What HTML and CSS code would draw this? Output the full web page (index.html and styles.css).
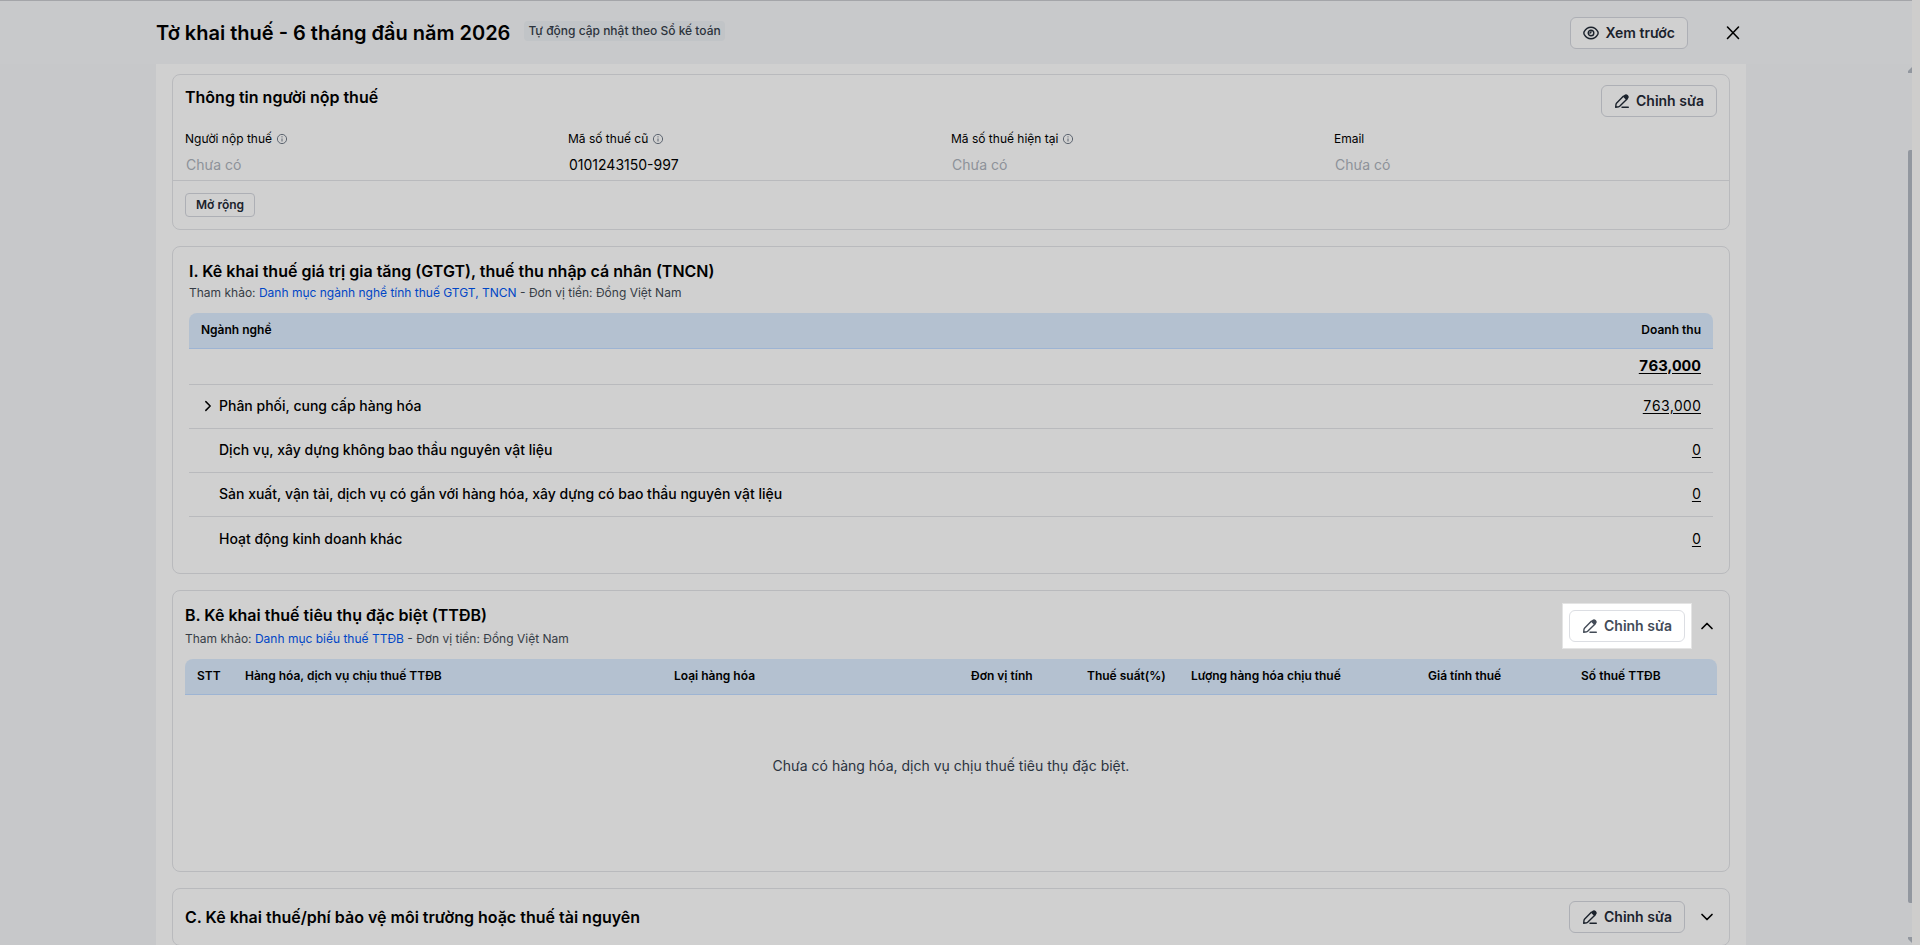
FILE: index.html
```html
<!DOCTYPE html>
<html lang="vi">
<head>
<meta charset="utf-8">
<title>Tờ khai thuế</title>
<link rel="stylesheet" href="styles.css">
</head>
<body>
<svg class="sprite" aria-hidden="true">
  <symbol id="pen" viewBox="0 0 16 16">
    <path d="M9.300 3.300 2.700 9.900c-.4.4-.6.9-.7 1.400l-.3 2.900 2.900-.4c.5-.1 1-.3 1.300-.7l6.900-6.900M8 14.200h6.300" fill="none" stroke="currentColor" stroke-width="1.400" stroke-linecap="round" stroke-linejoin="round"/>
    <path d="m8.800 3.500 1.500-1.500a2.400 2.400 0 0 1 3.400 0l.3.300a2.400 2.400 0 0 1 0 3.400l-1.500 1.500z" fill="currentColor"/>
  </symbol>
  <symbol id="info" viewBox="0 0 12 12">
    <circle cx="6" cy="6" r="4.600" fill="none" stroke="currentColor"/>
    <path d="M6 5.500v3M6 3.300v1.100" fill="none" stroke="currentColor"/>
  </symbol>
  <symbol id="chevron" viewBox="0 0 16 16">
    <path d="m3 5.500 5 5 5-5" fill="none" stroke="currentColor" stroke-width="1.700" stroke-linecap="round" stroke-linejoin="round"/>
  </symbol>
</svg>

<div class="app">
  <header class="topbar">
    <div class="container topbar-inner">
      <h1 class="page-title">Tờ khai thuế - 6 tháng đầu năm 2026</h1>
      <span class="badge">Tự động cập nhật theo Sổ kế toán</span>
      <div class="topbar-actions">
        <button class="btn" type="button">
          <svg class="icon" viewBox="0 0 16 16" fill="none" stroke="currentColor" stroke-width="1.400" stroke-linecap="round"><path d="M8 2.200c3.300 0 5.500 2 6.800 4.400.4.900.4 1.900 0 2.800-1.300 2.400-3.500 4.400-6.800 4.400S2.500 11.800 1.200 9.400a3.300 3.300 0 0 1 0-2.800C2.500 4.200 4.700 2.200 8 2.200z"/><circle cx="8" cy="8" r="2.800"/><path d="M8 6.800c0 .8-.4 1.200-1.200 1.200"/></svg>
          Xem trước
        </button>
        <button class="icon-btn close" type="button" aria-label="Đóng">
          <svg class="icon" viewBox="0 0 16 16"><path d="M2.500 2l11 11.500M13.500 2l-11 11.500" stroke="currentColor" stroke-width="1.600" stroke-linecap="round"/></svg>
        </button>
      </div>
    </div>
  </header>

  <main class="scroll">
    <div class="container panel">
      <section class="card payer">
        <div class="card-head">
          <h2 class="card-title">Thông tin người nộp thuế</h2>
          <button class="btn" type="button"><svg class="icon"><use href="#pen"/></svg>Chỉnh sửa</button>
        </div>
        <div class="fields">
          <div class="field">
            <label for="payer">Người nộp thuế <svg class="info"><use href="#info"/></svg></label>
            <input id="payer" type="text" placeholder="Chưa có" readonly>
          </div>
          <div class="field">
            <label for="old-code">Mã số thuế cũ <svg class="info"><use href="#info"/></svg></label>
            <input id="old-code" type="text" value="0101243150-997" readonly>
          </div>
          <div class="field">
            <label for="new-code">Mã số thuế hiện tại <svg class="info"><use href="#info"/></svg></label>
            <input id="new-code" type="text" placeholder="Chưa có" readonly>
          </div>
          <div class="field">
            <label for="email">Email</label>
            <input id="email" type="text" placeholder="Chưa có" readonly>
          </div>
        </div>
        <div class="payer-foot"><button class="btn btn-small" type="button">Mở rộng</button></div>
      </section>

      <section class="card vat">
        <h2 class="card-title">I. Kê khai thuế giá trị gia tăng (GTGT), thuế thu nhập cá nhân (TNCN)</h2>
        <p class="note">Tham khảo: <a href="#">Danh mục ngành nghề tính thuế GTGT, TNCN</a> - Đơn vị tiền: Đồng Việt Nam</p>
        <table class="table">
          <thead><tr><th>Ngành nghề</th><th class="num">Doanh thu</th></tr></thead>
          <tbody>
            <tr class="total"><td></td><td class="num"><a href="#">763,000</a></td></tr>
            <tr><td><div class="trade"><button class="icon-btn expand" type="button" aria-label="Mở"><svg><use href="#chevron"/></svg></button>Phân phối, cung cấp hàng hóa</div></td><td class="num"><a href="#">763,000</a></td></tr>
            <tr><td><div class="trade leaf">Dịch vụ, xây dựng không bao thầu nguyên vật liệu</div></td><td class="num"><a href="#">0</a></td></tr>
            <tr><td><div class="trade leaf">Sản xuất, vận tải, dịch vụ có gắn với hàng hóa, xây dựng có bao thầu nguyên vật liệu</div></td><td class="num"><a href="#">0</a></td></tr>
            <tr><td><div class="trade leaf">Hoạt động kinh doanh khác</div></td><td class="num"><a href="#">0</a></td></tr>
          </tbody>
        </table>
      </section>

      <section class="card excise">
        <div class="section-head">
          <div>
            <h2 class="card-title">B. Kê khai thuế tiêu thụ đặc biệt (TTĐB)</h2>
            <p class="note">Tham khảo: <a href="#">Danh mục biểu thuế TTĐB</a> - Đơn vị tiền: Đồng Việt Nam</p>
          </div>
          <div class="section-actions">
            <div class="spotlight"><button class="btn" type="button"><svg class="icon"><use href="#pen"/></svg>Chỉnh sửa</button></div>
            <button class="icon-btn up" type="button" aria-label="Thu gọn"><svg class="icon"><use href="#chevron"/></svg></button>
          </div>
        </div>
        <table class="table goods">
          <colgroup><col class="c-no"><col><col class="c-kind"><col class="c-unit"><col class="c-rate"><col class="c-qty"><col class="c-price"><col class="c-tax"></colgroup>
          <thead><tr><th>STT</th><th>Hàng hóa, dịch vụ chịu thuế TTĐB</th><th>Loại hàng hóa</th><th>Đơn vị tính</th><th>Thuế suất(%)</th><th>Lượng hàng hóa chịu thuế</th><th>Giá tính thuế</th><th>Số thuế TTĐB</th></tr></thead>
        </table>
        <p class="empty">Chưa có hàng hóa, dịch vụ chịu thuế tiêu thụ đặc biệt.</p>
      </section>

      <section class="card env">
        <div class="section-head">
          <h2 class="card-title">C. Kê khai thuế/phí bảo vệ môi trường hoặc thuế tài nguyên</h2>
          <div class="section-actions">
            <button class="btn" type="button"><svg class="icon"><use href="#pen"/></svg>Chỉnh sửa</button>
            <button class="icon-btn" type="button" aria-label="Mở"><svg class="icon"><use href="#chevron"/></svg></button>
          </div>
        </div>
      </section>
    </div>
    <div class="scrollbar" aria-hidden="true">
      <svg class="arrow" viewBox="0 0 4 6"><path d="M4 0v6H0V4z"/></svg>
      <div class="thumb"></div>
      <svg class="arrow" viewBox="0 0 4 6"><path d="M4 6V0H0v2z"/></svg>
    </div>
  </main>
</div>
</body>
</html>
```

FILE: styles.css
```css
* { box-sizing: border-box; }

body {
  margin: 0;
  background: #cecdcc;
  color: #000;
  font: 400 14px/20px Inter, "Noto Sans", sans-serif;
}

h1, h2, p { margin: 0; }
.sprite { display: none; }
svg { display: block; flex: none; }
.icon { width: 16px; height: 16px; }

.app {
  display: flex;
  flex-direction: column;
  height: 100vh;
  margin-right: 8px;
  overflow: hidden;
  background: #c7c8ca;
}

.container {
  width: 100%;
  max-width: 1590px;
  margin: 0 auto;
}

.topbar {
  flex: none;
  height: 64px;
  padding-right: 10px;
  border-top: 1px solid #a4a5a9;
  background: #c8c9cb;
}
.topbar-inner {
  display: flex;
  align-items: center;
  height: 100%;
  gap: 14px;
}
.page-title { font-size: 20px; line-height: 28px; font-weight: 600; }
.badge {
  padding: 0 4px;
  margin-bottom: 4px;
  border-radius: 4px;
  background: #c1c4c7;
  color: #2c333c;
  font-size: 12px;
  line-height: 20px;
  font-weight: 500;
}
.topbar-actions {
  display: flex;
  align-items: center;
  gap: 36px;
  margin-left: auto;
  padding-right: 4px;
}

button { font-family: inherit; }
.btn {
  display: inline-flex;
  align-items: center;
  gap: 6px;
  height: 32px;
  padding: 0 12px;
  border: 1px solid #adafb5;
  border-radius: 6px;
  background: #d0d0d0;
  color: #1b222c;
  font-size: 14px;
  line-height: 20px;
  font-weight: 600;
  white-space: nowrap;
}
.btn-small {
  height: 24px;
  padding: 0 10px;
  border-radius: 4px;
  font-size: 12px;
  line-height: 16px;
}
.icon-btn {
  display: inline-flex;
  padding: 0;
  border: 0;
  background: none;
  color: #000;
}
.close { padding: 0 1px; }
.up svg { transform: rotate(180deg); }

.scroll {
  position: relative;
  flex: 1;
  min-height: 0;
  padding-right: 10px;
  overflow: hidden;
}
.panel {
  display: flex;
  flex-direction: column;
  gap: 16px;
  padding: 10px 16px 32px;
  background: #d0d0d0;
}
.card { border: 1px solid #b9babd; border-radius: 8px; }
.card-title { font-size: 16px; line-height: 24px; font-weight: 600; }

.payer .card-head {
  display: flex;
  justify-content: space-between;
  padding: 10px 12px 12px;
}
.fields {
  display: grid;
  grid-template-columns: repeat(4, 1fr);
  padding: 0 12px;
  border-bottom: 1px solid #b9babd;
}
.field label {
  display: flex;
  align-items: center;
  gap: 4px;
  font-size: 12px;
  line-height: 20px;
}
.info { width: 12px; height: 12px; color: #5d6570; }
.field input {
  display: block;
  width: 100%;
  height: 31px;
  padding: 0 0 1px;
  border: 1px solid transparent;
  background: none;
  color: #000;
  font: inherit;
}
.field input::placeholder { color: #8d9299; opacity: 1; }
.payer-foot { display: flex; padding: 12px; }

.note { color: #363c45; font-size: 12px; line-height: 20px; }
.note a { color: #0046c6; text-decoration: none; }

.vat { padding: 12px 16px; }
.table { width: 100%; border-collapse: separate; border-spacing: 0; }
.vat .table { margin-top: 10px; }
.table th {
  height: 36px;
  padding: 7px 12px 8px;
  border-bottom: 1px solid #9db4d3;
  background: #b4c1d0;
  font-size: 12px;
  line-height: 20px;
  font-weight: 600;
  text-align: left;
  vertical-align: top;
  white-space: nowrap;
}
.table th:first-child { border-top-left-radius: 8px; }
.table th:last-child { border-top-right-radius: 8px; }
.table td {
  height: 44px;
  padding: 0 12px 2px;
  border-bottom: 1px solid #b9babd;
  font-weight: 500;
}
.table .total td { height: 36px; }
.table tr:last-child td { padding-bottom: 0; border-bottom: 0; }
.table .num { text-align: right; }
.table td.num { font-weight: 400; font-variant-numeric: tabular-nums; }
.table .total td.num { font-size: 15px; font-weight: 700; }
.num a { color: inherit; text-decoration: underline; text-underline-offset: 2px; }
.trade { display: flex; align-items: center; gap: 4px; }
.leaf { padding-left: 18px; }
.expand { width: 14px; }
.expand svg { width: 14px; height: 14px; transform: rotate(-90deg); }

.section-head {
  display: flex;
  align-items: center;
  justify-content: space-between;
}
.section-actions { display: flex; align-items: center; gap: 14px; padding-right: 2px; }
.excise { min-height: 282px; padding: 12px; }
.excise .note { margin-top: 2px; }
.goods { table-layout: fixed; margin-top: 10px; }
.c-no { width: 48px; }
.c-kind { width: 297px; }
.c-unit { width: 116px; }
.c-rate { width: 104px; }
.c-qty { width: 237px; }
.c-price { width: 153px; }
.c-tax { width: 148px; }
.spotlight {
  display: flex;
  margin: -7px;
  padding: 6px;
  border: 1px solid #e4e4e4;
  background: #fff;
}
.spotlight .btn {
  border-color: #dcdee3;
  background: #fff;
  color: #434b57;
}
.empty { padding-top: 61px; color: #2b333f; text-align: center; }
.env { padding: 12px; }

.scrollbar {
  position: absolute;
  inset: 3px 0 2px auto;
  display: flex;
  flex-direction: column;
  width: 4px;
}
.arrow { width: 4px; height: 6px; fill: #92979f; }
.thumb {
  flex: 1;
  margin: 77px 0 34px;
  border-radius: 2px 0 0 2px;
  background: #92979f;
}
```
